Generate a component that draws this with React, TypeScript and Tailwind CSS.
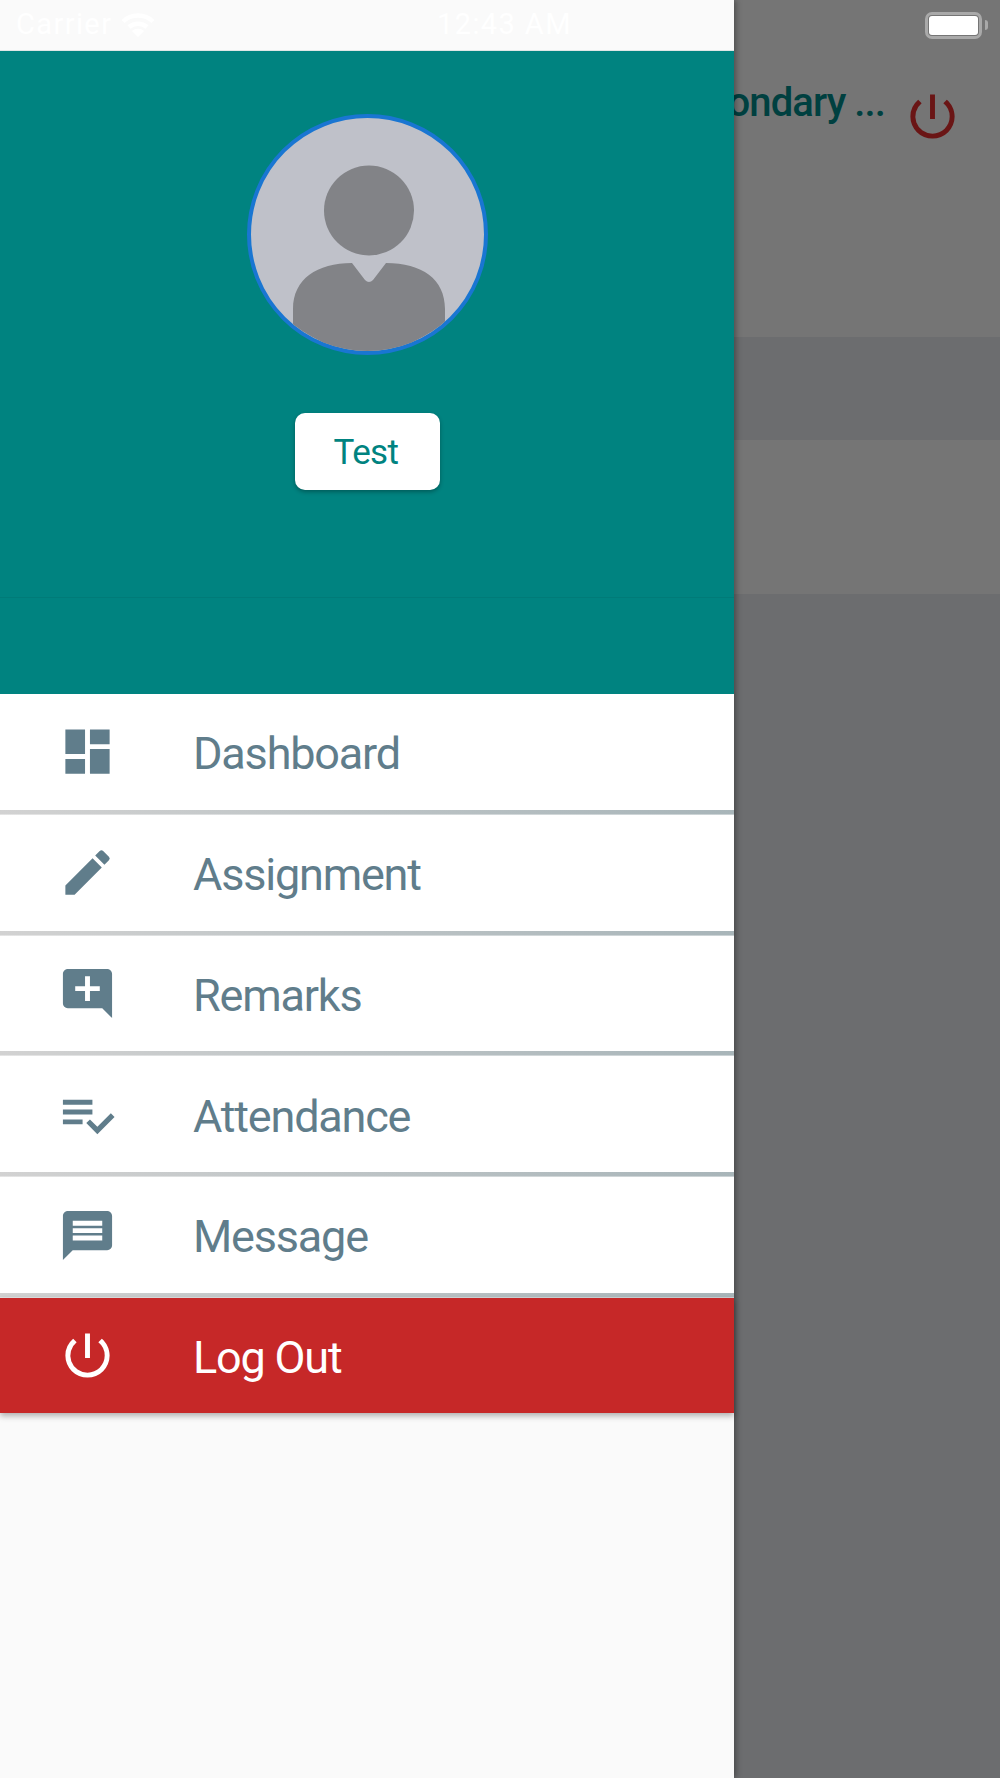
import type { IconType } from "react-icons";
import { MdAddComment, MdDashboard, MdEdit, MdMessage, MdPowerSettingsNew } from "react-icons/md";

// older material playlist_add_check, the current one has a thinner tick
const PlaylistCheck: IconType = ({ size, className }) => (
  <svg width={size} height={size} viewBox="0 0 24 24" fill="currentColor" className={className}>
    <path d="M14 10H2v2h12v-2zm0-4H2v2h12V6zM2 16h8v-2H2v2zm19.5-4.5L23 13l-6.99 7-4.51-4.5L13 14l3.01 3 5.49-5.5z" />
  </svg>
);

const menuItems: { label: string; icon: IconType }[] = [
  { label: "Dashboard", icon: MdDashboard },
  { label: "Assignment", icon: MdEdit },
  { label: "Remarks", icon: MdAddComment },
  { label: "Attendance", icon: PlaylistCheck },
  { label: "Message", icon: MdMessage },
];

function WifiGlyph() {
  return (
    <svg width="34" height="24" viewBox="0 0 34 24" fill="none" stroke="#ffffff" strokeWidth="4.5">
      <path d="M2 8.5C10 0.5 24 0.5 32 8.5" />
      <path d="M8 14C13 9.5 21 9.5 26 14" />
      <path d="M17 24L11 18C14.5 15 19.5 15 23 18Z" fill="#ffffff" stroke="none" />
    </svg>
  );
}

function Avatar() {
  return (
    <div className="size-[241px] overflow-hidden rounded-full border-4 border-[#1976d2] bg-[#bfc1c9]">
      <svg width="233" height="233" viewBox="4 4 233 233">
        <circle cx="122" cy="96.5" r="45" fill="#828387" />
        <path
          d="M105 149L118 166Q122 170 126 166L139 149C175 149 198 165 198 195L198 241L46 241L46 195C46 165 70 149 105 149Z"
          fill="#828387"
        />
      </svg>
    </div>
  );
}

function MenuRow({ label, icon: Icon }: { label: string; icon: IconType }) {
  return (
    <div>
      <div className="flex h-[115.8px] items-center bg-white">
        <div className="flex w-[193px] shrink-0 pl-[58px]">
          <Icon size={59} className="text-[#607d8b]" />
        </div>
        <span className="pt-[4px] text-[45px] tracking-[-1.2px] text-[#607d8b]">{label}</span>
      </div>
      <div className="h-[5px] border-b border-white/40 bg-linear-to-r from-[#d2d2d2] to-[#a8b5b9]" />
    </div>
  );
}

export default function App() {
  return (
    <div className="relative h-[1778px] w-full overflow-hidden bg-[#6c6d6f] font-['Roboto',sans-serif]">
      {/* screen behind the drawer */}
      <div className="flex h-[337px] flex-col bg-[#757575]">
        <div className="flex h-[50px] items-center justify-end pr-[12px]">
          <div className="flex items-center">
            <div className="h-[27px] w-[57px] rounded-[7px] border-[3px] border-[#a9a9a9] p-[1px]">
              <div className="h-full w-full rounded-[3px] bg-white" />
            </div>
            <div className="ml-[3px] h-[10px] w-[3px] rounded-r-sm bg-[#a9a9a9]" />
          </div>
        </div>
        <div className="mt-[28px] flex items-start justify-end pr-[45px]">
          <span className="mt-[2px] text-[40px] leading-[46px] font-medium tracking-[-0.9px] whitespace-nowrap text-[#004040]">
            Higher Secondary ...
          </span>
          <MdPowerSettingsNew size={59} className="mt-[9px] ml-[18px] -mr-[7px] text-[#6a1515]" />
        </div>
      </div>
      <div className="mt-[103px] h-[154px] bg-[#757575]" />

      {/* drawer */}
      <div className="absolute top-0 bottom-0 left-0 flex w-[734px] flex-col bg-[#fafafa] shadow-[2px_0_6px_rgba(0,0,0,0.35)]">
        <div className="relative flex h-[51px] shrink-0 items-center border-b border-[#dfe6e6] pl-[16px] text-[29px] tracking-[1.4px] text-white">
          <span>Carrier</span>
          <span className="ml-[9px]">
            <WifiGlyph />
          </span>
          <span className="absolute left-[437px]">12:43 AM</span>
        </div>
        <div className="flex h-[643px] shrink-0 flex-col items-center bg-[#008380]">
          <div className="mt-[63px]">
            <Avatar />
          </div>
          <div className="mt-[58px] flex h-[77px] w-[145px] items-center justify-center rounded-[10px] bg-white pt-[4px] pr-[2px] text-[35px] tracking-[-0.6px] text-[#008380] shadow-[0_2px_4px_rgba(0,0,0,0.3)]">
            Test
          </div>
          <div className="mt-[107px] h-px w-full bg-[#007b78]" />
        </div>
        {menuItems.map((item) => (
          <MenuRow key={item.label} label={item.label} icon={item.icon} />
        ))}
        <div className="flex h-[115px] items-center bg-[#c62828] shadow-[0_3px_6px_rgba(0,0,0,0.3)]">
          <div className="flex w-[193px] shrink-0 pl-[58px]">
            <MdPowerSettingsNew size={59} className="text-white" />
          </div>
          <span className="pt-[4px] text-[45px] tracking-[-1.2px] text-white">Log Out</span>
        </div>
      </div>
    </div>
  );
}
